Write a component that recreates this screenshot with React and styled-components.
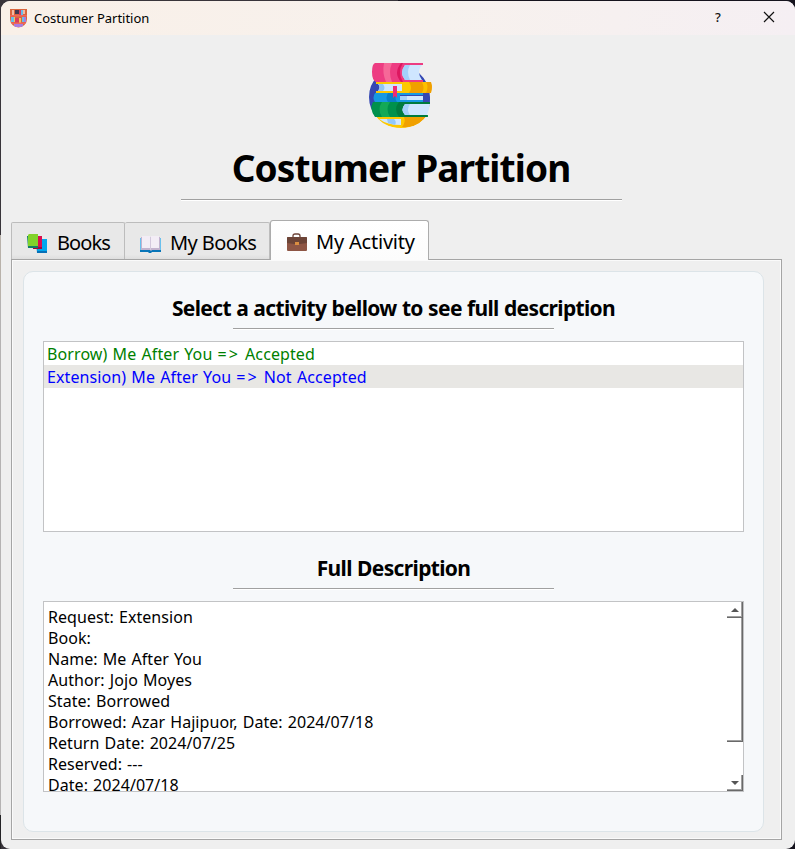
import React from 'react';
import styled, { createGlobalStyle, css } from 'styled-components';

const GlobalStyle = createGlobalStyle`
  *, *::before, *::after { box-sizing: border-box; }
  body {
    margin: 0;
    font-family: 'Noto Sans', 'Open Sans', sans-serif;
    color: #000;
  }
  h1, h2, ul { margin: 0; padding: 0; }
`;

const Desktop = styled.div`
  height: 849px;
  padding: 1px 0 0 1px;
  overflow: hidden;
  background:
    linear-gradient(#38343a 0 235px, #b9b2aa 235px 300px, #b5b3b3 300px 815px, #242326 815px) 0 0 / 1px 100% no-repeat,
    linear-gradient(90deg, #38343a 50%, #15131d 50%);
`;

const Window = styled.main`
  height: 848px;
  display: flex;
  flex-direction: column;
  border-radius: 9px;
  overflow: hidden;
  background: #efefef;
`;

const TitleBar = styled.header`
  height: 34px;
  flex: none;
  display: flex;
  align-items: center;
  padding: 0 19px 0 8px;
  background: linear-gradient(90deg, #f9f0e8, #f7f1ed 55%, #f5eff3);
  svg { display: block; }
`;

const WindowTitle = styled.span`
  flex: 1;
  margin-left: 6px;
  font-size: 13px;
  line-height: 18px;
  letter-spacing: -0.03px;
  white-space: nowrap;
`;

const TitleButton = styled.button`
  display: flex;
  justify-content: center;
  width: 14px;
  margin-left: 37px;
  padding: 0 0 2px;
  border: 0;
  background: none;
  font: 500 13px/18px 'Noto Sans', sans-serif;
  color: #111;
`;

const Hero = styled.section`
  height: 185px;
  flex: none;
  display: flex;
  flex-direction: column;
  align-items: center;
  padding: 28px 0 0 6px;
  svg { display: block; flex: none; }
`;

const HeroTitle = styled.h1`
  height: 56px;
  flex: none;
  margin-top: 14px;
  font-size: 37px;
  line-height: 50px;
  letter-spacing: -0.88px;
  word-spacing: 1.500px;
  white-space: nowrap;
`;

const Rule = styled.div`
  width: ${p => p.$width}px;
  height: 2px;
  flex: none;
  border-top: 1px solid #a0a0a0;
  border-bottom: 1px solid #fff;
`;

const TabBar = styled.nav`
  height: 40px;
  flex: none;
  display: flex;
  align-items: flex-end;
  padding-left: 10px;
  margin-bottom: -1px;
  z-index: 1;
`;

const Tab = styled.button`
  display: flex;
  align-items: center;
  gap: 9px;
  width: ${p => p.$width}px;
  height: 37px;
  margin: 0 0 1px;
  padding: 3px 0 0 15px;
  border: 1px solid #bcbcbc;
  border-width: ${p => (p.$joined ? '1px 1px 0 0' : '1px 1px 0 1px')};
  border-radius: 2px 2px 0 0;
  background: linear-gradient(#e8e8e8 0 88%, #dedede);
  color: #000;
  font: 400 20px/28px 'Noto Sans', sans-serif;
  letter-spacing: ${p => p.$tracking}px;
  white-space: nowrap;
  svg { flex: none; margin-top: 2px; }
  ${p => p.$active && css`
    height: 40px;
    margin: 0;
    padding: 2px 0 0 15px;
    border-color: #acacac;
    border-radius: 3px 3px 0 0;
    background: linear-gradient(#fff, #fcfcfc);
  `}
`;

const Pane = styled.section`
  width: 771px;
  height: 581px;
  flex: none;
  margin-left: 10px;
  padding: 11px;
  border: 1px solid #a5a5a5;
  box-shadow: inset 1px 1px #fafafa, inset -1px -1px #fafafa;
`;

const Group = styled.div`
  width: 741px;
  height: 561px;
  display: flex;
  flex-direction: column;
  align-items: center;
  padding: 19px 19px 0;
  border: 1px solid #dce4e8;
  border-radius: 10px;
  background: #f6f8fa;
`;

const Heading = styled.h2`
  height: 37px;
  flex: none;
  font-size: 21px;
  line-height: 34px;
  letter-spacing: ${p => p.$tracking}px;
  word-spacing: 0.500px;
  white-space: nowrap;
`;

const Box = styled.div`
  width: 701px;
  height: 191px;
  flex: none;
  margin: 11px 0 ${p => p.$gap || 0}px;
  border: 1px solid #c2c3c5;
  background: #fff;
  overflow: hidden;
`;

const ActivityList = styled.ul`
  list-style: none;
`;

const ActivityItem = styled.li`
  height: 23px;
  padding-left: 3px;
  font-size: 16px;
  line-height: 24px;
  letter-spacing: 0.1px;
  word-spacing: 0.900px;
  white-space: nowrap;
  color: ${p => p.$color};
  background: ${p => (p.$selected ? '#e8e7e4' : 'transparent')};
`;

const ResultArrow = styled.span`
  letter-spacing: 2px;
`;

const DescriptionBox = styled(Box)`
  display: flex;
  justify-content: space-between;
`;

const DescriptionText = styled.div`
  padding: 5px 0 0 4px;
  font-size: 16px;
  line-height: 21px;
  letter-spacing: 0.05px;
  word-spacing: 0.900px;
  white-space: pre;
`;

const ScrollBar = styled.div`
  width: 16px;
  height: 189px;
  display: flex;
  flex-direction: column;
`;

const bevel = css`
  border-right: 1px solid #696969;
  border-bottom: 1px solid #696969;
  box-shadow: inset -1px -1px #a0a0a0;
`;

const ScrollArrow = styled.div`
  height: 16px;
  display: flex;
  align-items: center;
  justify-content: center;
  ${bevel}
`;

const ScrollThumb = styled.div`
  height: 124px;
  margin-bottom: 33px;
  ${bevel}
`;

const AppIcon = () => (
  <svg width="19" height="19" viewBox="0 0 19 19">
    <defs><clipPath id="app-round"><path d="M1 0h17v10a8.500 8.500 0 0 1-17 0z" /></clipPath></defs>
    <g clipPath="url(#app-round)">
      <path fill="#d9653d" d="M0 0h19v19H0z" />
      <path fill="#f3b8a0" d="M3 1h2v5H3zM14 1h2v4h-2z" />
      <path fill="#423850" d="M6 1h4v4H6z" />
      <path fill="#d63d5e" d="M10 1h2v5h-2zM6 9h4v5H6z" />
      <path fill="#69bce9" d="M12 1h2v5h-2zM2 8h3v5H2zM13 8h2v5h-2z" />
      <path fill="#f3c556" d="M10 9h2v5h-2zM5 8h1v5H5z" />
      <path fill="#a87de0" d="M15 8h2v5h-2zM5 15h9v3H5z" />
      <path fill="#ef665d" d="M1 6h17v1.500H1zM1 13.500h17V15H1z" />
    </g>
  </svg>
);

const CloseIcon = () => (
  <svg width="12" height="18" viewBox="0 0 12 18">
    <path d="M1 4l10 10M11 4L1 14" stroke="#111" strokeWidth="1.15" fill="none" />
  </svg>
);

const BooksLogo = () => (
  <svg width="64" height="66" viewBox="0 0 64 66">
    <defs><clipPath id="logo-round"><path d="M0 0h64v34A31.500 31 0 0 1 0 34z" /></clipPath></defs>
    <path fill="#3548b3" d="M8 14Q0 22 0 34q0 12 8 20h46q8-8 7-20 0-14-11-24z" />
    <path fill="#ed3c82" d="M6 0h48v2H36v15h18v2H7Q3 17 3 9T6 0z" />
    <path fill="#f66898" d="M15 0h8q-4 9 0 19h-6q-4-9-2-19z" />
    <path fill="#dd1760" d="M32 0h2q-6 9 0 19h-2q-8-9 0-19z" />
    <path fill="#cfe6ff" d="M36 2h17q-6 7 0 15H36q-6-7 0-15z" />
    <path fill="#a3d0fb" d="M36 2h5q-4 7 0 15h-5q-6-7 0-15z" />
    <path fill="#fdc800" d="M7 19h54q3 6 0 11H7v-2h26v-7H7z" />
    <path fill="#cfe6ff" d="M9 21h24v7H9q3-4 0-7z" />
    <path fill="#93c5f6" d="M9 21h5q3 4 0 7H9q3-4 0-7z" />
    <path fill="#f0a000" d="M40 19h22q2 5 0 11H40q4-5 0-11z" />
    <path fill="#fdc000" d="M53 19h4q3 5 0 11h-4q3-5 0-11z" />
    <path fill="#1699e3" d="M6 30h48v2H31v5h23v2H6q-3-4 0-9z" />
    <path fill="#087fc8" d="M19 30h9q-3 5 0 9h-9q-3-4 0-9z" />
    <path fill="#cfe6ff" d="M31 33h23v4H31z" />
    <path fill="#a3d0fb" d="M31 33h7v4h-7z" />
    <path fill="#ef2b75" d="M24 23h4v12l-2-2-2 2z" />
    <path fill="#00914c" d="M4 39h57v2H36q-5 6 0 11h23v2H6q-6-8-2-15z" />
    <path fill="#14a957" d="M13 39h8q-5 7 0 15h-8q-5-8 0-15z" />
    <path fill="#007b3e" d="M30 39h31v2H36q-5 6 0 11h22v2H30q-6-8 0-15z" />
    <path fill="#cfe6ff" d="M36 41h25q-1 6-3 11H36q-5-5 0-11z" />
    <path fill="#a3d0fb" d="M36 41h5q-4 6 0 11h-5q-5-5 0-11z" />
    <g clipPath="url(#logo-round)">
      <path fill="#fdc800" d="M7 54h50l-7 7q-18 8-36 0z" />
      <path fill="#cfe6ff" d="M10 56h22v6q-14 0-22-6z" />
      <path fill="#92c8fa" d="M18 56h7q3 3 1 6l-7-2z" />
      <path fill="#f0a000" d="M35 54h22l-7 7q-8 4-17 3 4-5 2-10z" />
    </g>
  </svg>
);

const BooksIcon = () => (
  <svg width="21" height="20" viewBox="0 0 21 20">
    <path fill="#0670b7" d="M9 6h11v13H10z" /><path fill="#00a7ed" d="M12 5h8v12H10z" />
    <path fill="#a10939" d="M5 3h10v12H6z" /><path fill="#d70f50" d="M8 2h7v11H6z" />
    <path fill="#107e65" d="M0 2h11v12H1z" /><path fill="#81d32b" d="M2 0h9v12H1V1z" />
  </svg>
);

const OpenBookIcon = () => (
  <svg width="21" height="18" viewBox="0 0 21 18">
    <path fill="#69c0ed" d="M0 3h21v14H0z" />
    <path fill="#0875b8" d="M0 15h21v2h-9l-1 1H9l-1-1H0z" />
    <path fill="#c3b3cf" d="M1 2h19v13h-8l-1 1-1-1H1z" />
    <path fill="#f3edf6" d="M2 1h8v12H2zM11 1h8v12h-8z" />
    <path fill="#d3c8dd" d="M10 2h1v13h-1z" />
  </svg>
);

const BriefcaseIcon = () => (
  <svg width="21" height="19" viewBox="0 0 21 19">
    <path d="M7 5V3q0-2 2-2h3q2 0 2 2v2" fill="none" stroke="#6d4438" strokeWidth="1.300" />
    <rect x="1" y="4" width="20" height="14" rx="1" fill="#8e5645" />
    <path fill="#6c4437" d="M2 4h18q1 0 1 1v5l-7 1H8l-7-1V5q0-1 1-1z" />
    <rect x="9" y="9" width="4" height="3" fill="#db8e41" />
  </svg>
);

const Arrow = ({ down }) => (
  <svg width="8" height="4" viewBox="0 0 8 4">
    <path fill="#555" d={down ? 'M0 0h8L4 4z' : 'M4 0l4 4H0z'} />
  </svg>
);

const tabs = [
  { label: 'Books', width: 114, tracking: -0.9, Icon: BooksIcon },
  { label: 'My Books', width: 145, tracking: -0.6, Icon: OpenBookIcon, joined: true },
  { label: 'My Activity', width: 159, tracking: -0.2, Icon: BriefcaseIcon, active: true },
];

const activities = [
  { request: 'Borrow', book: 'Me After You', result: 'Accepted', color: '#008000' },
  { request: 'Extension', book: 'Me After You', result: 'Not Accepted', color: '#0000ff', selected: true },
];

const description = [
  'Request: Extension',
  'Book:',
  'Name: Me After You',
  'Author: Jojo Moyes',
  'State: Borrowed',
  'Borrowed: Azar Hajipuor, Date: 2024/07/18',
  'Return Date: 2024/07/25',
  'Reserved: ---',
  'Date: 2024/07/18',
].join('\n');

export default function App() {
  return (
    <Desktop>
      <GlobalStyle />
      <Window>
        <TitleBar>
          <AppIcon />
          <WindowTitle>Costumer Partition</WindowTitle>
          <TitleButton aria-label="Help">?</TitleButton>
          <TitleButton aria-label="Close"><CloseIcon /></TitleButton>
        </TitleBar>
        <Hero>
          <BooksLogo />
          <HeroTitle>Costumer Partition</HeroTitle>
          <Rule $width={441} />
        </Hero>
        <TabBar>
          {tabs.map(({ label, width, tracking, Icon, active, joined }) => (
            <Tab key={label} $width={width} $tracking={tracking} $active={active} $joined={joined}>
              <Icon />{label}
            </Tab>
          ))}
        </TabBar>
        <Pane>
          <Group>
            <Heading $tracking={-0.66}>Select a activity bellow to see full description</Heading>
            <Rule $width={321} />
            <Box $gap={19}>
              <ActivityList>
                {activities.map(({ request, book, result, color, selected }) => (
                  <ActivityItem key={request} $color={color} $selected={selected}>
                    {`${request}) ${book} `}<ResultArrow>=&gt;</ResultArrow>{` ${result}`}
                  </ActivityItem>
                ))}
              </ActivityList>
            </Box>
            <Heading $tracking={-0.65}>Full Description</Heading>
            <Rule $width={321} />
            <DescriptionBox>
              <DescriptionText>{description}</DescriptionText>
              <ScrollBar>
                <ScrollArrow><Arrow /></ScrollArrow>
                <ScrollThumb />
                <ScrollArrow><Arrow down /></ScrollArrow>
              </ScrollBar>
            </DescriptionBox>
          </Group>
        </Pane>
      </Window>
    </Desktop>
  );
}
